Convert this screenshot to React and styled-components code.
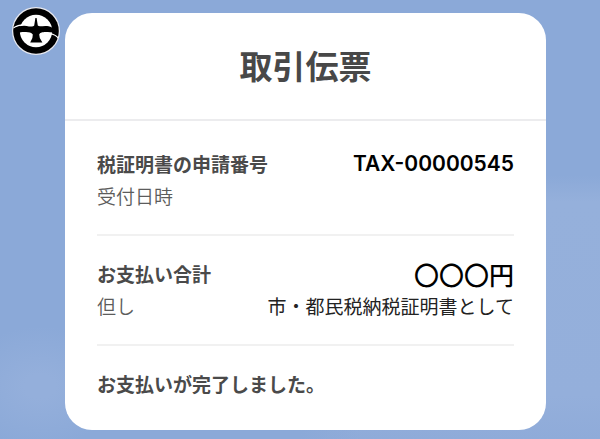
import React from 'react'
import styled, { createGlobalStyle } from 'styled-components'

const App = () => {
    return (
        <>
            <GlobalStyle />
            <Page>
                <Emblem />
                <Receipt>
                    <Header>
                        <Title>取引伝票</Title>
                    </Header>
                    <Body>
                        <Section>
                            <Row>
                                <Label>税証明書の申請番号</Label>
                                <Code>TAX-00000545</Code>
                            </Row>
                            <Row>
                                <SubLabel>受付日時</SubLabel>
                            </Row>
                        </Section>
                        <Section>
                            <Row>
                                <Label>お支払い合計</Label>
                                <Amount>〇〇〇円</Amount>
                            </Row>
                            <Row>
                                <SubLabel>但し</SubLabel>
                                <Note>市・都民税納税証明書として</Note>
                            </Row>
                        </Section>
                        <Section>
                            <Row>
                                <Label as='p'>お支払いが完了しました。</Label>
                            </Row>
                        </Section>
                    </Body>
                </Receipt>
            </Page>
        </>
    )
}

const Emblem = () => (
    <EmblemSvg viewBox='0 0 48 48' role='img' aria-label='ロゴ'>
        <circle cx='24' cy='24' r='24' fill='#e9eaf0' />
        <circle cx='24' cy='24' r='22.8' fill='#000' />
        <circle cx='24' cy='24' r='16.2' fill='#fff' />
        <path d='M1.4 20.2 C5 18 9 16.6 14 17.4 L14 19.6 C9 18.4 5 19.4 1.4 21.6 Z' fill='#fff' />
        <path d='M46.4 30.2 C43.5 27.6 40 25.6 36 26 L37 27.6 C41 27.4 43.5 29 46 31.4 Z' fill='#fff' />
        <path
            d='M3 21 C7 18.6 13 18.2 17 19.4 C19.4 19.8 21.4 19.6 22.2 18.6 L23.4 11 H24.6 L25.8 18.6 C27 20 31 18.6 35 19 C39.5 19.4 44 22.4 46 28 C42.4 25.4 38.4 24.9 35 25 C31.4 25 28.2 25.2 27.2 27.4 L27.8 31 L30.4 35.4 H18.2 L20.4 31 L20.8 27.4 C19.4 25.4 17 25.2 14 25 C10 24.8 6.4 25.4 4 27 Z'
            fill='#000'
        />
    </EmblemSvg>
)

const GlobalStyle = createGlobalStyle`
* {
    box-sizing: border-box;
}

body {
    margin: 0;
    font-family: 'Noto Sans CJK JP', sans-serif;
    background: #8ba9d8;
}

h1, p {
    margin: 0;
}
`

const Page = styled.main`
    display: flex;
    align-items: flex-start;
    gap: 5px;
    min-height: 100vh;
    padding: 7px 54px 9px 12px;
    background:
        radial-gradient(ellipse 80px 60px at 40px 88%, #94afdb 20%, transparent),
        linear-gradient(90deg, #8ba9d8 50%, transparent 60%),
        linear-gradient(#8ba9d8 40%, #95b0db 46%, #94afdb 90%, #8fabd9);
`

const EmblemSvg = styled.svg`
    flex: none;
    width: 48px;
    height: 48px;
`

const Receipt = styled.article`
    flex: 1;
    margin-top: 6px;
    border-radius: 27px;
    background: #fff;
`

const Header = styled.header`
    padding: 27px 32px 29px;
    border-bottom: 2px solid #ececee;
    text-align: center;
`

const Title = styled.h1`
    font-size: 33px;
    font-weight: 700;
    line-height: 50px;
    color: #484848;
`

const Body = styled.div`
    padding: 5px 32px 8px;
`

const Section = styled.section`
    padding: 22px 0;

    & + & {
        border-top: 2px solid #f1f1f1;
    }
`

const Row = styled.div`
    display: flex;
    justify-content: space-between;
    align-items: center;
    height: 32px;
    font-size: 19px;
    line-height: 32px;
    white-space: nowrap;
`

const Label = styled.span`
    font-weight: 700;
    color: #4a4a4a;
`

const SubLabel = styled.span`
    font-weight: 350;
    color: #5c5c5c;
`

const Note = styled.span`
    color: #222;
`

const Code = styled.span`
    font-family: Inter, sans-serif;
    font-size: 21px;
    font-weight: 600;
    color: #000;
`

const Amount = styled.span`
    font-size: 25px;
    font-weight: 500;
    color: #000;
`

export default App
